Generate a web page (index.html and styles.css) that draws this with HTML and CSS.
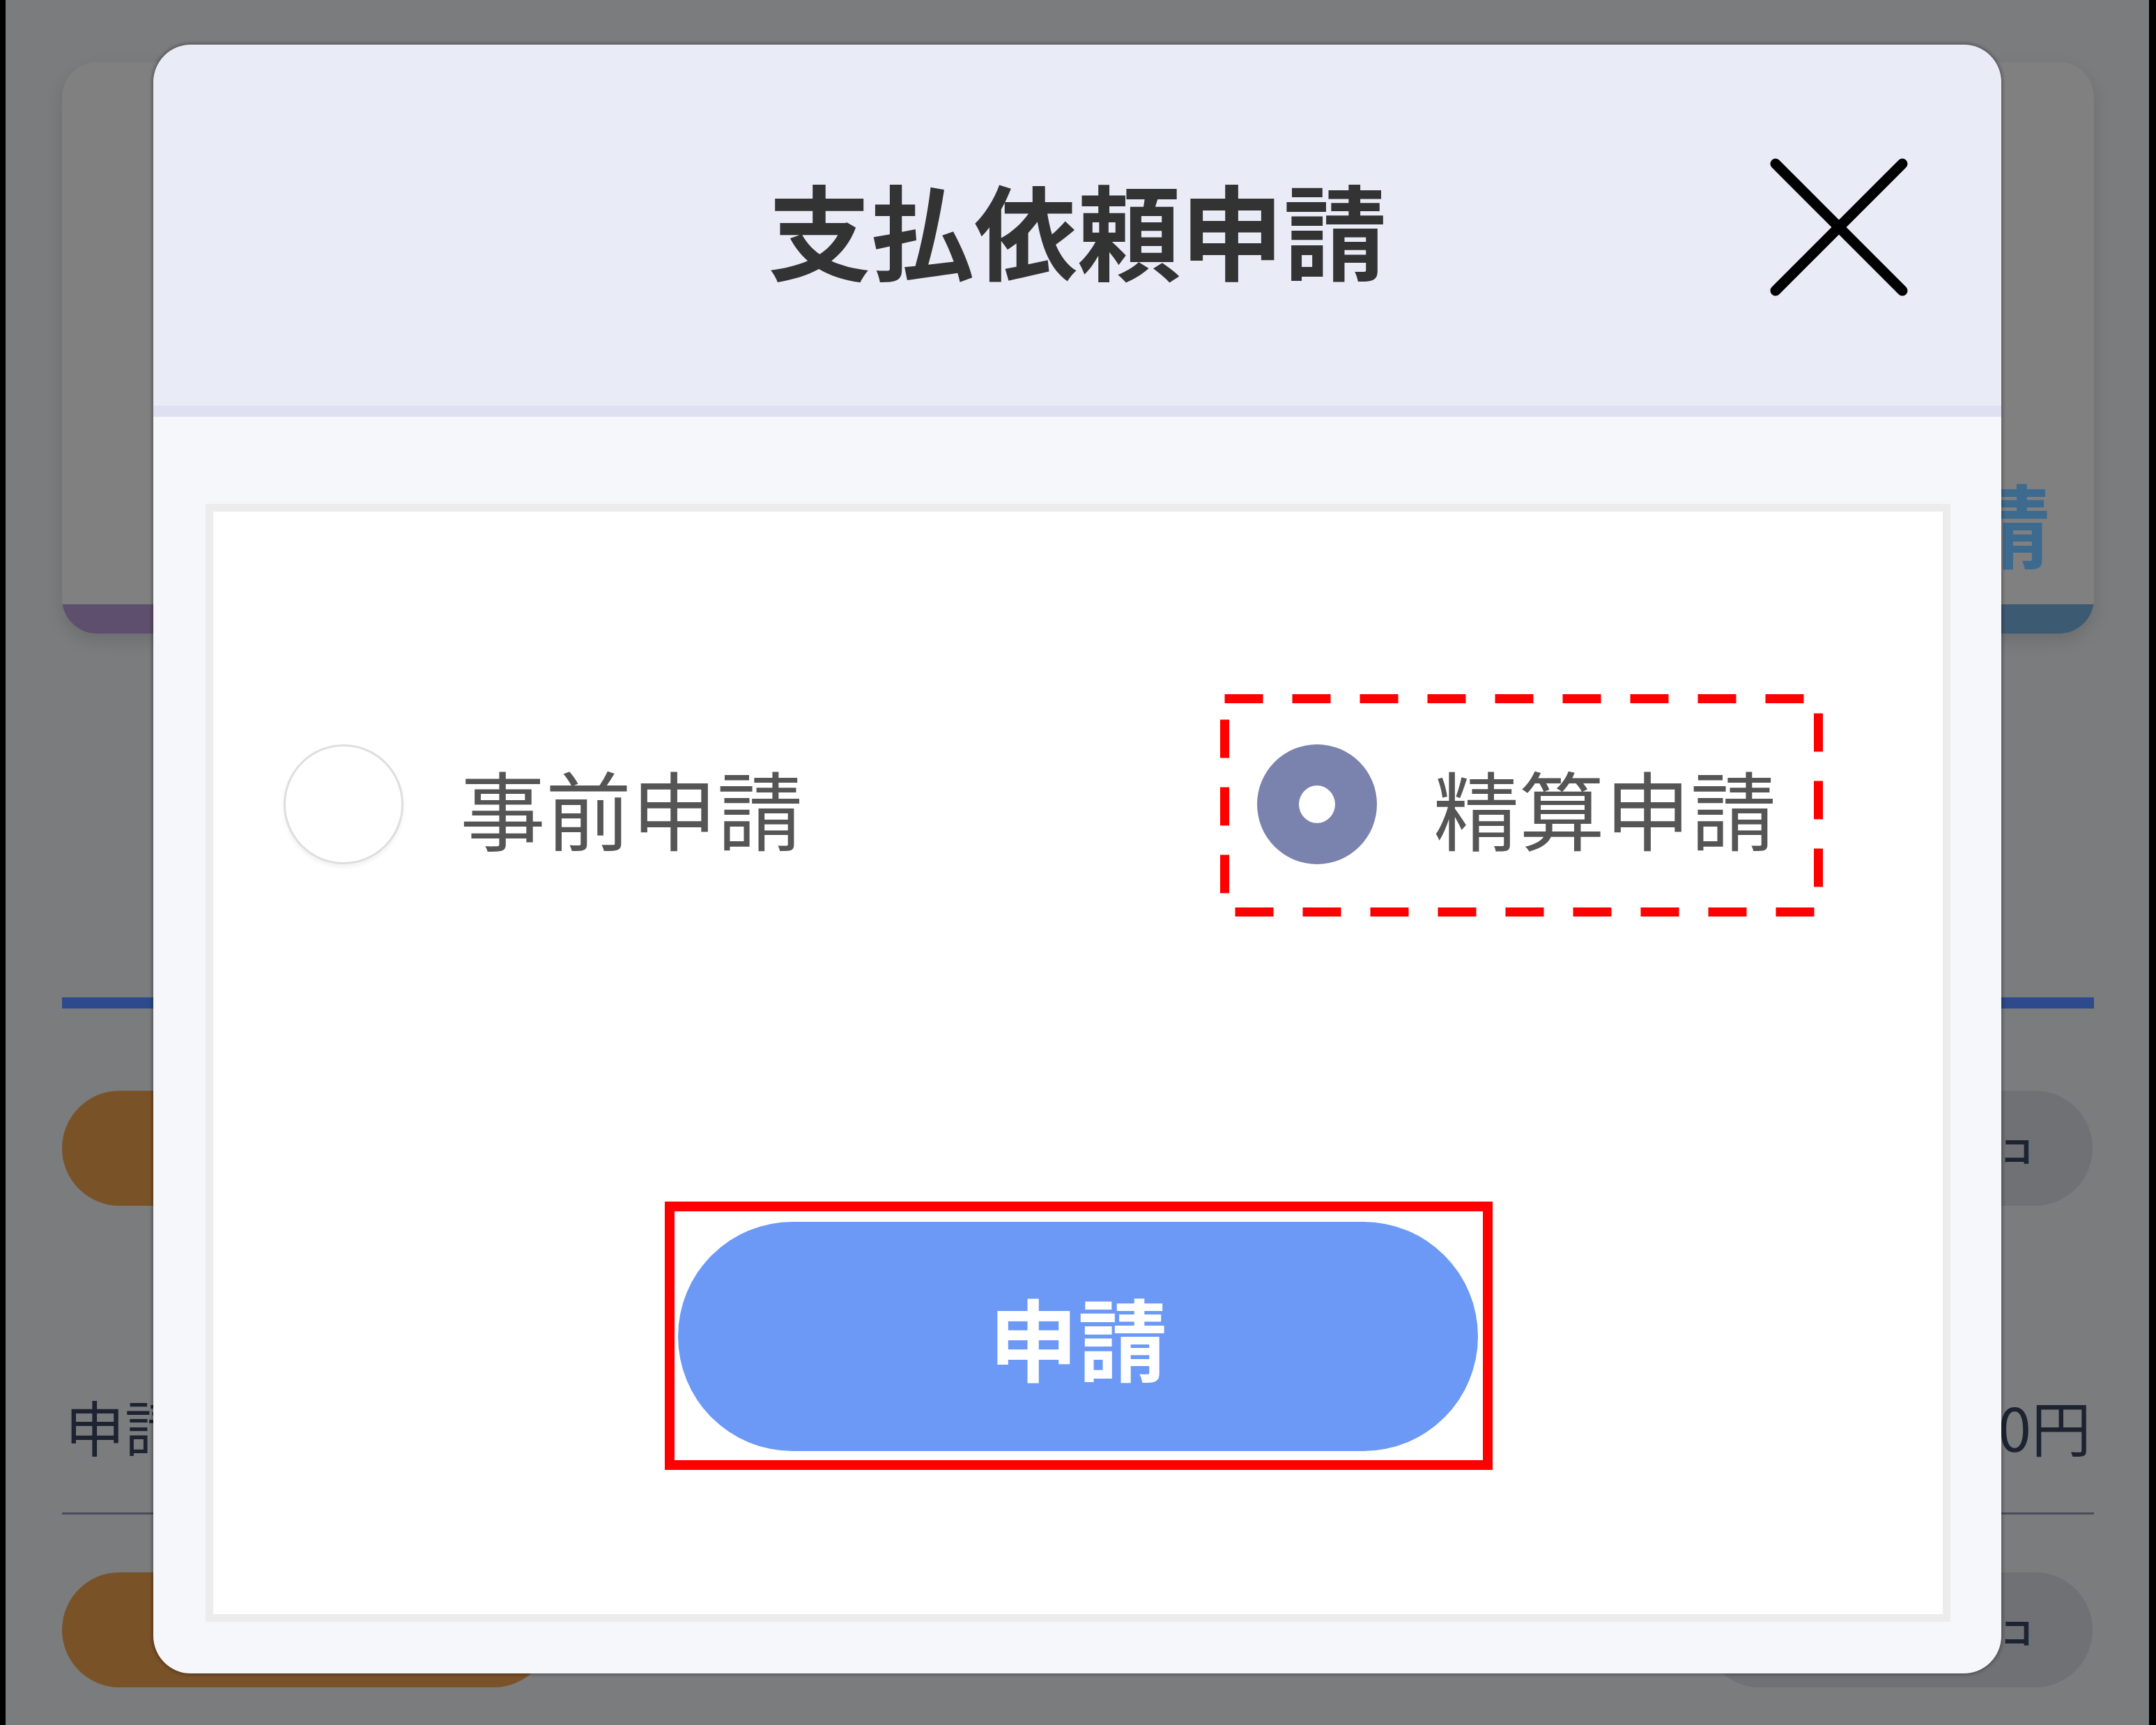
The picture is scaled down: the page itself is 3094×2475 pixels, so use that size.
FILE: index.html
```html
<!DOCTYPE html>
<html lang="ja">
<head>
<meta charset="utf-8">
<title>支払依頼申請</title>
<link rel="stylesheet" href="styles.css">
</head>
<body>
<div class="screen">
  <div class="page">
    <div class="summary-card">
      <div class="tab-labels">
        <span class="tab-label tab-left">事前申請</span>
        <span class="tab-label tab-right">精算申請</span>
      </div>
      <div class="tab-bars">
        <div class="tab-bar bar-purple"></div>
        <div class="tab-bar bar-blue"></div>
      </div>
    </div>
    <div class="divider-blue"></div>
    <div class="pill-row">
      <span class="pill pill-brown"></span>
      <span class="pill pill-gray">コ</span>
    </div>
    <div class="info-row">
      <span>申請金額</span>
      <span>10,000円</span>
    </div>
    <div class="rule"></div>
    <div class="pill-row">
      <span class="pill pill-brown"></span>
      <span class="pill pill-gray">コ</span>
    </div>
  </div>

  <div class="modal">
    <div class="modal-header">
      <h1 class="modal-title">支払依頼申請</h1>
      <button class="close" aria-label="閉じる">
        <svg width="198" height="198" viewBox="0 0 198 198">
          <line x1="8" y1="8" x2="190" y2="190" stroke="#000" stroke-width="15" stroke-linecap="round"/>
          <line x1="190" y1="8" x2="8" y2="190" stroke="#000" stroke-width="15" stroke-linecap="round"/>
        </svg>
      </button>
    </div>
    <div class="modal-body">
      <div class="panel">
        <div class="options">
          <label class="option">
            <span class="radio radio-off"></span>
            <span class="option-label">事前申請</span>
          </label>
          <label class="option option-second">
            <span class="radio radio-on"></span>
            <span class="option-label">精算申請</span>
            <svg class="mark-dashed" width="865" height="319" viewBox="0 0 865 319">
              <rect x="6.5" y="6.5" width="852" height="306" fill="none" stroke="#ff0000" stroke-width="13" stroke-dasharray="55 42"/>
            </svg>
          </label>
        </div>
        <div class="submit-wrap">
          <button class="submit">申請</button>
          <span class="mark-solid"></span>
        </div>
      </div>
    </div>
  </div>
</div>
</body>
</html>
```

FILE: styles.css
```css
html, body {
  margin: 0;
  padding: 0;
  background: #000;
}

body {
  font-family: "Noto Sans CJK JP", "Noto Sans", sans-serif;
}

.screen {
  position: relative;
  margin-left: 8px;
  width: 3076px;
  height: 2475px;
  background: #7b7c7e;
  overflow: hidden;
}

/* ---------- dimmed background page ---------- */
.page {
  padding: 89px 0 0 81px;
  width: 2916px;
  display: flex;
  flex-direction: column;
}

.summary-card {
  height: 820px;
  border-radius: 50px;
  background: #808080;
  overflow: hidden;
  display: flex;
  flex-direction: column;
  box-shadow: 0 10px 24px rgba(0, 0, 0, 0.12);
}

.tab-labels {
  flex: 1;
  display: flex;
  justify-content: space-between;
  padding: 594px 63px 0 420px;
}

.tab-label {
  font-size: 130px;
  line-height: 1;
  font-weight: 700;
}

.tab-left { color: #5e4f6e; }
.tab-right { color: #3d6a8f; }

.tab-bars {
  display: flex;
  height: 42px;
}

.tab-bar { flex: 1; }
.bar-purple { background: #5e4f6e; }
.bar-blue { background: #3d5a73; }

.divider-blue {
  margin-top: 522px;
  height: 16px;
  background: #2c4a8c;
}

.pill-row {
  margin-top: 118px;
  height: 165px;
  display: flex;
  justify-content: space-between;
}

.pill {
  height: 165px;
  border-radius: 83px;
  display: flex;
  align-items: center;
  justify-content: flex-end;
}

.pill-brown {
  width: 702px;
  background: #7a5228;
}

.pill-gray {
  width: 560px;
  margin-right: 2px;
  background: #707175;
  padding-right: 86px;
  box-sizing: border-box;
  font-size: 46px;
  font-weight: 700;
  color: #1d2330;
}

.info-row {
  margin-top: 256px;
  height: 120px;
  display: flex;
  justify-content: space-between;
  align-items: center;
  padding: 0 4px 0 4px;
  font-size: 86px;
  line-height: 1;
  color: #1d2330;
}

.rule {
  margin-top: 64px;
  height: 3px;
  background: #4a4d5a;
}

.rule + .pill-row {
  margin-top: 83px;
}

/* ---------- modal ---------- */
.modal {
  position: absolute;
  left: 212px;
  top: 64px;
  width: 2652px;
  height: 2337px;
  border-radius: 54px;
  overflow: hidden;
  display: flex;
  flex-direction: column;
  box-shadow: 0 0 5px 2px rgba(0, 0, 0, 0.3);
}

.modal-header {
  position: relative;
  height: 518px;
  flex: none;
  background: #e9ebf7;
  border-bottom: 16px solid #dfe1f3;
  display: flex;
  align-items: center;
  justify-content: center;
}

.modal-title {
  margin: 0;
  font-size: 148px;
  line-height: 1;
  font-weight: 700;
  color: #333;
  padding-top: 8px;
}

.close {
  position: absolute;
  right: 134px;
  top: 163px;
  width: 198px;
  height: 198px;
  padding: 0;
  border: none;
  background: none;
  display: block;
}

.close svg { display: block; }

.modal-body {
  flex: 1;
  background: #f6f7fb;
  padding: 125px 73px 74px 75px;
  display: flex;
}

.panel {
  flex: 1;
  border: 11px solid #ececec;
  background: #fff;
  display: flex;
  flex-direction: column;
}

.options {
  margin-top: 334px;
  padding-left: 101px;
  display: flex;
  align-items: center;
}

.option {
  position: relative;
  display: flex;
  align-items: center;
  gap: 81px;
}

.option-second {
  margin-left: 652px;
}

.radio {
  width: 172px;
  height: 172px;
  border-radius: 50%;
  box-sizing: border-box;
  flex: none;
}

.radio-off {
  background: #fff;
  border: 3px solid #dedede;
  box-shadow: 0 4px 6px rgba(0, 0, 0, 0.06);
}

.radio-on {
  background: #7a83ad;
  display: flex;
  align-items: center;
  justify-content: center;
}

.radio-on::after {
  content: "";
  width: 52px;
  height: 54px;
  border-radius: 50%;
  background: #fff;
}

.option-label {
  font-size: 123px;
  line-height: 1;
  color: #555;
  padding-top: 6px;
}

.mark-dashed {
  position: absolute;
  left: -53px;
  top: -72px;
}

.submit-wrap {
  position: relative;
  align-self: center;
  margin-top: 513px;
}

.submit {
  width: 1148px;
  height: 329px;
  border: none;
  border-radius: 165px;
  background: #6b99f5;
  color: #fff;
  font-family: "Noto Sans CJK JP", "Noto Sans", sans-serif;
  font-size: 128px;
  font-weight: 700;
  line-height: 1;
  padding: 0;
  display: flex;
  align-items: center;
  justify-content: center;
}

.mark-solid {
  position: absolute;
  left: -19px;
  top: -29px;
  width: 1188px;
  height: 385px;
  border: 14px solid #ff0000;
  box-sizing: border-box;
}
```
